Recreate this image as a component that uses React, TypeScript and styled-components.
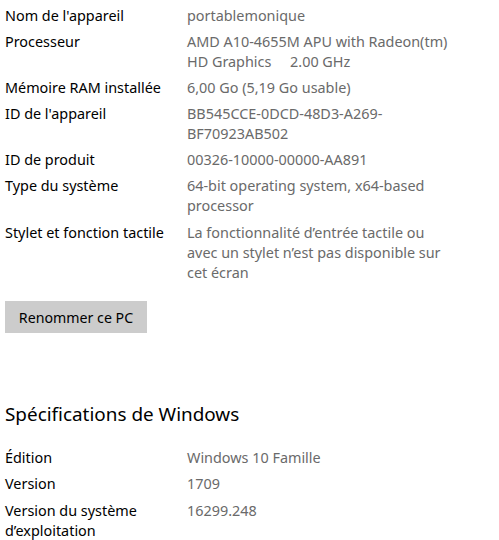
import React from "react";
import styled, { createGlobalStyle } from "styled-components";

const Global = createGlobalStyle`
  html, body { margin: 0; padding: 0; background: #ffffff; }
  body { font-family: "Noto Sans", "Open Sans", sans-serif; }
`;

const Page = styled.div`
  padding: 5.5px 0 0 5px;
  width: 494px;
  height: 534.5px;
  overflow: hidden;
`;

const Table = styled.div`
  display: flex;
  flex-direction: column;
  gap: 6.2px;
`;

const Row = styled.div`
  display: grid;
  grid-template-columns: 182px 1fr;
  font-size: 14.4px;
  line-height: 20px;
`;

const Label = styled.div`
  color: #000000;
`;

const Value = styled.div`
  color: #6a6a6a;
`;

const Line = styled.div`
  white-space: pre;
`;

const Button = styled.button`
  margin-top: 18.5px;
  width: 142px;
  height: 32px;
  border: none;
  background: #cccccc;
  color: #000000;
  font-family: inherit;
  font-size: 14.2px;
  padding: 0;
  cursor: pointer;
`;

const Heading = styled.h2`
  margin: 67px 0 20px;
  font-size: 18.9px;
  line-height: 28px;
  font-weight: 400;
  color: #000000;
`;

type Item = { label: string[]; value: string[] };

const device: Item[] = [
  { label: ["Nom de l'appareil"], value: ["portablemonique"] },
  { label: ["Processeur"], value: ["AMD A10-4655M APU with Radeon(tm)", "HD Graphics     2.00 GHz"] },
  { label: ["Mémoire RAM installée"], value: ["6,00 Go (5,19 Go usable)"] },
  { label: ["ID de l'appareil"], value: ["BB545CCE-0DCD-48D3-A269-", "BF70923AB502"] },
  { label: ["ID de produit"], value: ["00326-10000-00000-AA891"] },
  { label: ["Type du système"], value: ["64-bit operating system, x64-based", "processor"] },
  {
    label: ["Stylet et fonction tactile"],
    value: ["La fonctionnalité d’entrée tactile ou", "avec un stylet n’est pas disponible sur", "cet écran"],
  },
];

const windows: Item[] = [
  { label: ["Édition"], value: ["Windows 10 Famille"] },
  { label: ["Version"], value: ["1709"] },
  { label: ["Version du système", "d’exploitation"], value: ["16299.248"] },
];

const Specs = ({ items }: { items: Item[] }) => (
  <Table>
    {items.map((it, i) => (
      <Row key={i}>
        <Label>
          {it.label.map((l, j) => (
            <Line key={j}>{l}</Line>
          ))}
        </Label>
        <Value>
          {it.value.map((l, j) => (
            <Line key={j}>{l}</Line>
          ))}
        </Value>
      </Row>
    ))}
  </Table>
);

export default function App() {
  return (
    <>
      <Global />
      <Page>
        <Specs items={device} />
        <Button>Renommer ce PC</Button>
        <Heading>Spécifications de Windows</Heading>
        <Specs items={windows} />
      </Page>
    </>
  );
}
